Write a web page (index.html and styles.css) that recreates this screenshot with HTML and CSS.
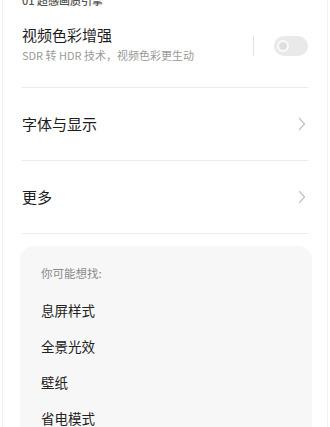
FILE: index.html
```html
<!DOCTYPE html>
<html lang="zh-CN">
<head>
<meta charset="utf-8">
<link rel="stylesheet" href="styles.css">
</head>
<body>
<div class="frame">
  <div class="page">
    <div class="section-label">01 超感画质引擎</div>
    <div class="switch-row">
      <div class="texts">
        <div class="title">视频色彩增强</div>
        <div class="subtitle">SDR 转 HDR 技术，视频色彩更生动</div>
      </div>
      <div class="vline"></div>
      <div class="toggle"><div class="knob"></div></div>
    </div>
    <div class="divider"></div>
    <div class="nav-row">
      <div class="title">字体与显示</div>
      <svg class="chev" width="8" height="14" viewBox="0 0 8 14"><path d="M1.5 1.5 L6.5 7 L1.5 12.5" fill="none" stroke="#c4c4c4" stroke-width="1.3" stroke-linecap="round" stroke-linejoin="round"/></svg>
    </div>
    <div class="divider"></div>
    <div class="nav-row">
      <div class="title">更多</div>
      <svg class="chev" width="8" height="14" viewBox="0 0 8 14"><path d="M1.5 1.5 L6.5 7 L1.5 12.5" fill="none" stroke="#c4c4c4" stroke-width="1.3" stroke-linecap="round" stroke-linejoin="round"/></svg>
    </div>
    <div class="divider"></div>
    <div class="card">
      <div class="card-label">你可能想找:</div>
      <div class="item">息屏样式</div>
      <div class="item">全景光效</div>
      <div class="item">壁纸</div>
      <div class="item">省电模式</div>
    </div>
  </div>
</div>
</body>
</html>
```

FILE: styles.css
```css
html, body {
  margin: 0;
  padding: 0;
  background: #ffffff;
  font-family: "Noto Sans CJK SC", "Noto Sans", sans-serif;
}
.frame {
  margin: 0 2px;
  border-left: 1px solid #f2f2f2;
  border-right: 1px solid #f2f2f2;
  height: 427px;
  overflow: hidden;
}
.page {
  padding: 0 19px;
}
.section-label {
  margin-top: -8px;
  font-size: 11px;
  line-height: 16px;
  font-weight: 500;
  color: #555555;
}
.switch-row {
  display: flex;
  align-items: center;
  padding: 17px 0 24px;
}
.texts {
  flex: 1;
  display: flex;
  flex-direction: column;
  gap: 2px;
}
.title {
  font-size: 15px;
  line-height: 20px;
  color: #1c1c1c;
}
.subtitle {
  font-size: 11px;
  line-height: 16px;
  color: #9a9a9a;
}
.vline {
  width: 1px;
  height: 20px;
  background: #e2e2e2;
  margin-right: 20px;
  margin-top: 4px;
}
.toggle {
  width: 34px;
  height: 20px;
  border-radius: 10px;
  background: #e9e9e9;
  display: flex;
  align-items: center;
  padding-left: 3px;
  box-sizing: border-box;
  margin-top: 4px;
}
.knob {
  width: 8px;
  height: 8px;
  border-radius: 50%;
  background: #e0e0e0;
  border: 2.5px solid #fbfbfb;
}
.divider {
  height: 1px;
  background: #ececec;
}
.nav-row {
  height: 72px;
  display: flex;
  align-items: center;
  justify-content: space-between;
}
.chev {
  margin-right: 2px;
}
.card {
  margin: 12px -4px 0 -2px;
  background: #f7f7f7;
  border-radius: 14px;
  padding: 19px 21px 20px;
}
.card-label {
  font-size: 11.5px;
  line-height: 16px;
  color: #8a8a8a;
  margin-bottom: 11px;
}
.item {
  font-size: 13.5px;
  line-height: 36px;
  color: #222222;
}
```
